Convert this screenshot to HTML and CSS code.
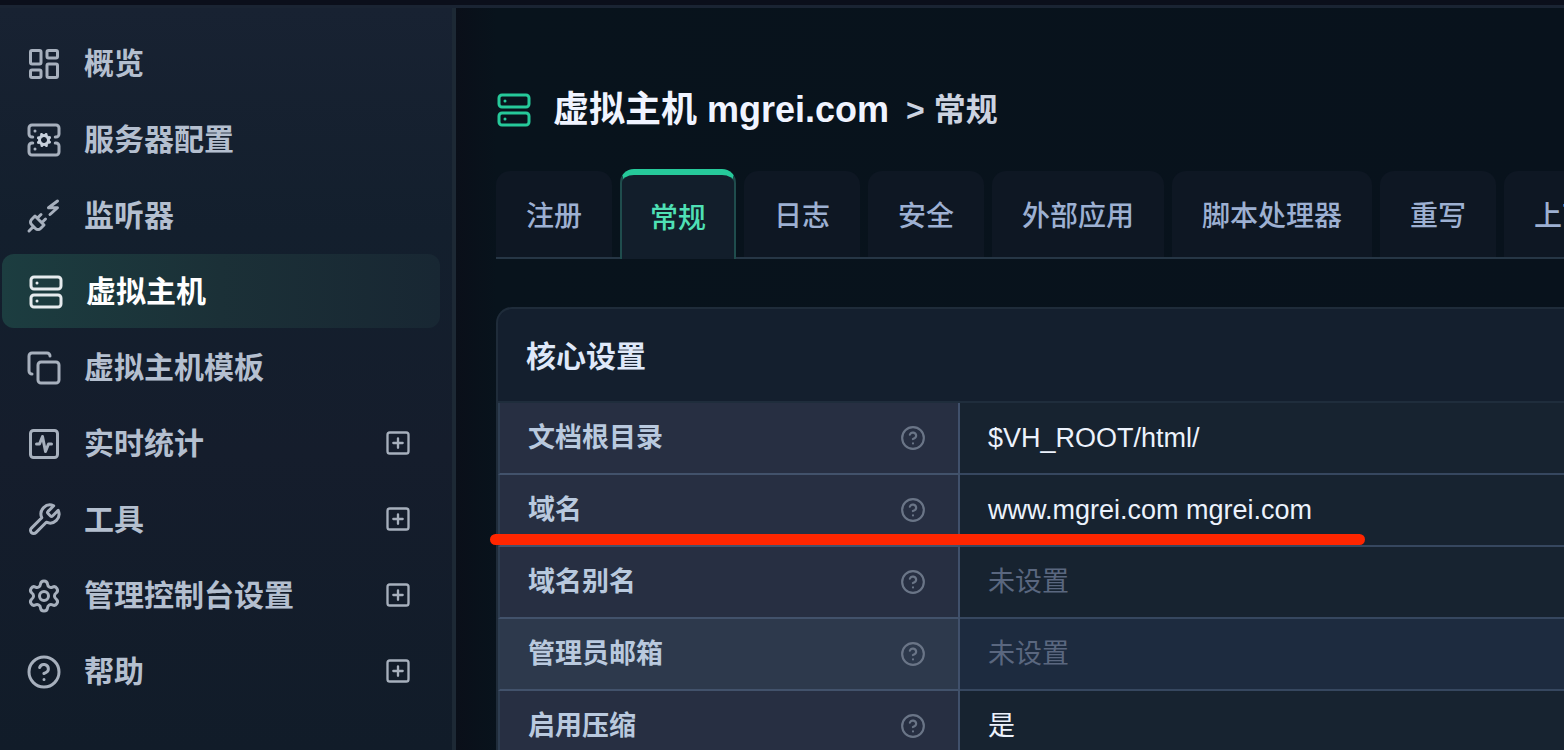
FILE: index.html
```html
<!DOCTYPE html>
<html lang="zh-CN">
<head>
<meta charset="utf-8">
<meta name="viewport" content="width=device-width, initial-scale=1">
<title>虚拟主机 mgrei.com - 常规</title>
<link rel="stylesheet" href="styles.css">
</head>
<body>
<svg class="sprite" aria-hidden="true">
  <symbol id="dashboard" viewBox="0 0 24 24"><rect width="7" height="9" x="3" y="3" rx="1"/><rect width="7" height="5" x="14" y="3" rx="1"/><rect width="7" height="9" x="14" y="12" rx="1"/><rect width="7" height="5" x="3" y="16" rx="1"/></symbol>
  <symbol id="server-cog" viewBox="0 0 24 24"><path d="M4.5 10H4a2 2 0 0 1-2-2V4a2 2 0 0 1 2-2h16a2 2 0 0 1 2 2v4a2 2 0 0 1-2 2h-.5M4.5 14H4a2 2 0 0 0-2 2v4a2 2 0 0 0 2 2h16a2 2 0 0 0 2-2v-4a2 2 0 0 0-2-2h-.5M6 6h.01M6 18h.01"/><g stroke="#c8d1dd"><circle cx="12" cy="12" r="3"/><path d="m15.7 13.4-.9-.3M9.2 10.9l-.9-.3M10.6 15.7l.3-.9M13.6 15.7l-.4-1M10.8 9.3l-.4-1M8.3 13.6l1-.4M14.7 10.8l1-.4M13.4 8.3l-.3.9"/></g></symbol>
  <symbol id="plug" viewBox="0 0 24 24"><path d="M6.3 20.3a2.4 2.4 0 0 0 3.4 0L12 18l-6-6-2.3 2.3a2.4 2.4 0 0 0 0 3.4ZM2 22l3-3M7.5 13.5 10 11M10.5 16.5 13 14M21 2l-6 4.5h6L16 11"/></symbol>
  <symbol id="server" viewBox="0 0 24 24"><rect width="20" height="8" x="2" y="2" rx="2"/><rect width="20" height="8" x="2" y="14" rx="2"/><path d="M6 6h.01M6 18h.01"/></symbol>
  <symbol id="copy" viewBox="0 0 24 24"><rect width="14" height="14" x="8" y="8" rx="2"/><path d="M4 16c-1.1 0-2-.9-2-2V4c0-1.1.9-2 2-2h10c1.1 0 2 .9 2 2"/></symbol>
  <symbol id="activity" viewBox="0 0 24 24"><rect width="18" height="18" x="3" y="3" rx="2"/><path d="M17 12h-2l-2 5-2-10-2 5H7"/></symbol>
  <symbol id="wrench" viewBox="0 0 24 24"><path d="M14.7 6.3a1 1 0 0 0 0 1.4l1.6 1.6a1 1 0 0 0 1.4 0l3.77-3.77a6 6 0 0 1-7.94 7.94l-6.91 6.91a2.12 2.12 0 0 1-3-3l6.91-6.91a6 6 0 0 1 7.94-7.94l-3.76 3.76z"/></symbol>
  <symbol id="settings" viewBox="0 0 24 24"><path d="M9.671 4.136a2.34 2.34 0 0 1 4.659 0 2.34 2.34 0 0 0 3.319 1.915 2.34 2.34 0 0 1 2.33 4.033 2.34 2.34 0 0 0 0 3.831 2.34 2.34 0 0 1-2.33 4.033 2.34 2.34 0 0 0-3.319 1.915 2.34 2.34 0 0 1-4.659 0 2.34 2.34 0 0 0-3.32-1.915 2.34 2.34 0 0 1-2.33-4.033 2.34 2.34 0 0 0 0-3.831A2.34 2.34 0 0 1 6.35 6.051a2.34 2.34 0 0 0 3.319-1.915"/><circle cx="12" cy="12" r="3"/></symbol>
  <symbol id="help" viewBox="0 0 24 24"><circle cx="12" cy="12" r="10"/><path d="M9.09 9a3 3 0 0 1 5.83 1c0 2-3 3-3 3M12 17h.01"/></symbol>
  <symbol id="plus" viewBox="0 0 24 24"><rect width="18" height="18" x="3" y="3" rx="2"/><path d="M8 12h8M12 8v8"/></symbol>
</svg>

<header class="topbar"></header>
<div class="layout">
  <nav class="sidebar" aria-label="主导航">
    <a class="nav-item" href="#"><svg class="icon"><use href="#dashboard"/></svg><span>概览</span></a>
    <a class="nav-item" href="#"><svg class="icon"><use href="#server-cog"/></svg><span>服务器配置</span></a>
    <a class="nav-item" href="#"><svg class="icon"><use href="#plug"/></svg><span>监听器</span></a>
    <a class="nav-item active" href="#" aria-current="page"><svg class="icon"><use href="#server"/></svg><span>虚拟主机</span></a>
    <a class="nav-item" href="#"><svg class="icon"><use href="#copy"/></svg><span>虚拟主机模板</span></a>
    <a class="nav-item" href="#"><svg class="icon"><use href="#activity"/></svg><span>实时统计</span><svg class="icon expand"><use href="#plus"/></svg></a>
    <a class="nav-item" href="#"><svg class="icon"><use href="#wrench"/></svg><span>工具</span><svg class="icon expand"><use href="#plus"/></svg></a>
    <a class="nav-item" href="#"><svg class="icon"><use href="#settings"/></svg><span>管理控制台设置</span><svg class="icon expand"><use href="#plus"/></svg></a>
    <a class="nav-item" href="#"><svg class="icon"><use href="#help"/></svg><span>帮助</span><svg class="icon expand"><use href="#plus"/></svg></a>
  </nav>

  <main class="content">
    <h1 class="page-title"><svg class="icon"><use href="#server"/></svg><span>虚拟主机 mgrei.com</span><small>&gt; 常规</small></h1>

    <div class="tabs">
      <a class="tab" href="#">注册</a>
      <a class="tab active" href="#" aria-current="page">常规</a>
      <a class="tab" href="#">日志</a>
      <a class="tab" href="#">安全</a>
      <a class="tab" href="#">外部应用</a>
      <a class="tab" href="#">脚本处理器</a>
      <a class="tab" href="#">重写</a>
      <a class="tab" href="#">上下文</a>
    </div>

    <section class="card">
      <h2 class="card-title">核心设置</h2>
      <table class="settings">
        <tr><th scope="row"><div class="label">文档根目录<button class="tip" aria-label="帮助：文档根目录"><svg class="icon"><use href="#help"/></svg></button></div></th><td>$VH_ROOT/html/</td></tr>
        <tr><th scope="row"><div class="label">域名<button class="tip" aria-label="帮助：域名"><svg class="icon"><use href="#help"/></svg></button></div></th><td>www.mgrei.com mgrei.com</td></tr>
        <tr><th scope="row"><div class="label">域名别名<button class="tip" aria-label="帮助：域名别名"><svg class="icon"><use href="#help"/></svg></button></div></th><td class="unset">未设置</td></tr>
        <tr class="hover"><th scope="row"><div class="label">管理员邮箱<button class="tip" aria-label="帮助：管理员邮箱"><svg class="icon"><use href="#help"/></svg></button></div></th><td class="unset">未设置</td></tr>
        <tr><th scope="row"><div class="label">启用压缩<button class="tip" aria-label="帮助：启用压缩"><svg class="icon"><use href="#help"/></svg></button></div></th><td>是</td></tr>
      </table>
      <div class="underline"></div>
    </section>
  </main>
</div>
</body>
</html>
```
FILE: styles.css
```css
* { box-sizing: border-box; }

body {
  margin: 0;
  height: 100vh;
  overflow: hidden;
  display: flex;
  flex-direction: column;
  background: #08121c;
  color: #e8f0fc;
  font-family: "Liberation Sans", "Noto Sans CJK SC", sans-serif;
  line-height: 1.2;
}

.sprite { position: absolute; width: 0; height: 0; }

.icon {
  flex: none;
  width: 36px;
  height: 36px;
  fill: none;
  stroke: currentColor;
  stroke-width: 2;
  stroke-linecap: round;
  stroke-linejoin: round;
}

.topbar {
  flex: none;
  height: 8px;
  background: #0b0f1b;
  border-bottom: 3px solid #1a2433;
}

.layout { flex: 1; display: flex; min-height: 0; }

/* Sidebar */
.sidebar {
  flex: none;
  width: 456px;
  padding: 18px 14px 0 0;
  display: flex;
  flex-direction: column;
  gap: 2px;
  border-right: 4px solid #1d2935;
  background: linear-gradient(#182232, #131f2d 30%, #151d2c 60%, #111c29);
}

.nav-item {
  flex: none;
  height: 74px;
  display: flex;
  align-items: center;
  gap: 22px;
  padding: 2px 26px 0;
  color: #b4bfcf;
  font-size: 30px;
  font-weight: 700;
  text-decoration: none;
}

.nav-item .icon { color: #a7b0bd; }

.nav-item.active {
  margin: 0 -2px 0 2px;
  border-radius: 12px;
  background: linear-gradient(90deg, #1c3d40, #1b3037 50%, #182733);
  color: #fff;
}

.nav-item.active .icon { color: #e6ebee; }

.nav-item .expand { width: 28px; height: 28px; margin: 0 0 2px auto; }

/* Content */
.content {
  flex: 1;
  min-width: 0;
  padding: 78px 0 0 40px;
  background: linear-gradient(90deg, #0a0f19, #08131c 40px, #08121c);
}

.page-title {
  display: flex;
  align-items: center;
  margin: 0;
  height: 48px;
  font-size: 36px;
  font-weight: 700;
  color: #f0f4ff;
}

.page-title .icon { margin-right: 21px; color: #26c99a; }

.page-title small {
  margin-left: 17px;
  font-size: 32px;
  color: #ccd3e0;
}

.tabs {
  display: flex;
  align-items: flex-end;
  gap: 8px;
  height: 90px;
  margin-top: 35px;
  overflow: hidden;
  box-shadow: inset 0 -2px #263645;
}

.tab {
  flex: none;
  height: 86px;
  margin-bottom: 2px;
  padding: 2px 30px 0;
  border-radius: 14px 14px 0 0;
  background: #0e1723;
  color: #9db0d2;
  font-size: 28px;
  font-weight: 500;
  line-height: 88px;
  text-decoration: none;
}

.tab.active {
  height: 90px;
  margin-bottom: 0;
  padding: 2px 28px 0;
  border: 2px solid #1f4d4d;
  border-top: 6px solid #26c99a;
  border-bottom: 0;
  background: #121e2b;
  color: #4fe0b5;
  line-height: 84px;
}

.card {
  position: relative;
  margin-top: 48px;
  border: 2px solid #1f2c3a;
  border-right: 0;
  border-radius: 16px 0 0 0;
  background: #141f2e;
}

.card-title {
  margin: 0;
  padding: 4px 28px 0;
  border-bottom: 2px solid #1f2d3c;
  color: #dfe8f9;
  font-size: 30px;
  font-weight: 700;
  line-height: 88px;
}

.settings {
  width: 100%;
  border-collapse: separate;
  border-spacing: 0;
  table-layout: fixed;
  font-size: 27px;
}

.settings th,
.settings td {
  height: 72px;
  padding: 0 28px;
  border-bottom: 2px solid #36475f;
  text-align: left;
}

.settings th {
  width: 462px;
  padding: 0 32px 0 28px;
  border-left: 2px solid #2d3d50;
  border-right: 2px solid #40506b;
  border-bottom-color: #42526b;
  background: #272f42;
  color: #b9c9de;
  font-weight: 700;
}

.settings td { background: #172330; color: #ecf2fc; }
.settings td.unset { color: #5a677f; }
.settings .hover th { background: #2d394c; }
.settings .hover td { background: #1d2b3f; }

.label { display: flex; align-items: center; justify-content: space-between; }

.tip {
  display: flex;
  padding: 0;
  border: 0;
  background: none;
  color: #6a7587;
}

.tip .icon { width: 26px; height: 26px; }

/* Marker stroke drawn over the table */
.underline {
  position: absolute;
  top: 225px;
  left: -8px;
  width: 875px;
  height: 11px;
  border-radius: 6px;
  background: #ff2600;
}
```
